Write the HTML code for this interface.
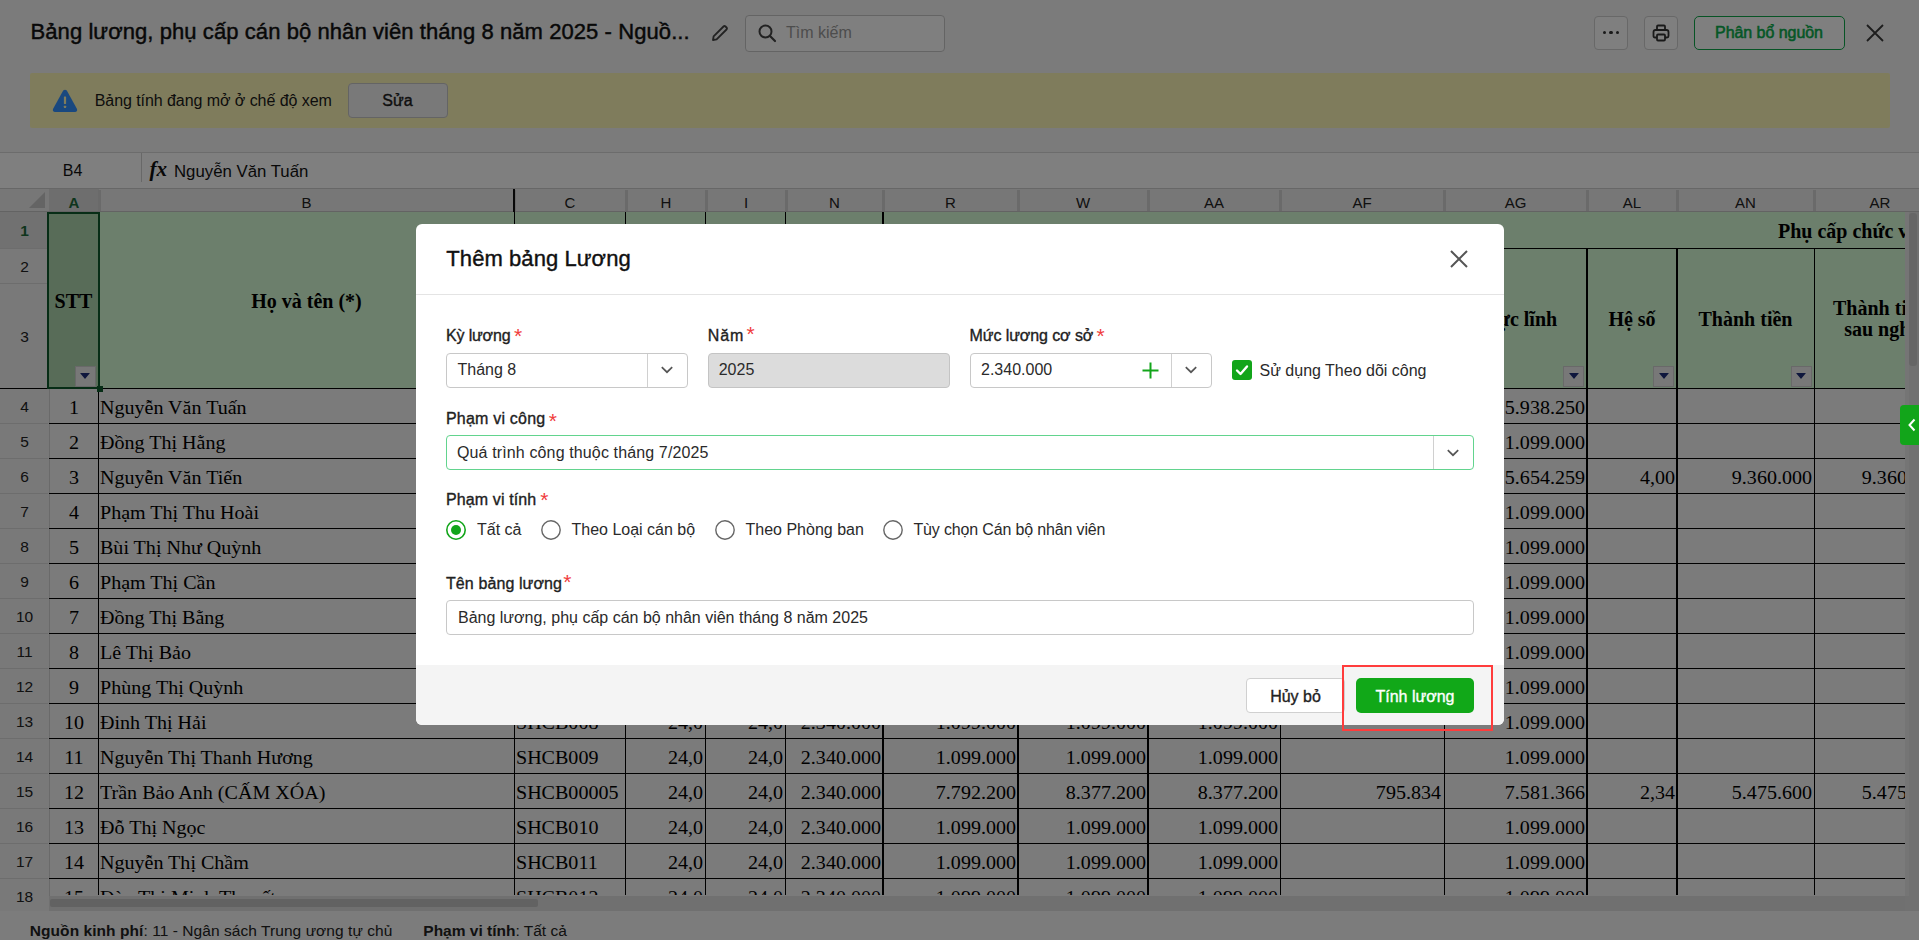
<!DOCTYPE html><html><head><meta charset="utf-8"><style>
html,body{margin:0;padding:0;}
body{width:1919px;height:940px;overflow:hidden;position:relative;background:#f6f6f6;}
.t{position:absolute;white-space:nowrap;line-height:1;}
.med{-webkit-text-stroke:0.35px currentColor;}
</style></head><body>
<div class="t" style="left:30.5px;top:21.18px;font-family:'Liberation Sans', sans-serif;font-size:22px;color:#111;font-weight:400;-webkit-text-stroke:0.45px #111;letter-spacing:0.08px;">Bảng lương, phụ cấp cán bộ nhân viên tháng 8 năm 2025 - Nguồ...</div>
<svg style="position:absolute;left:710px;top:23px" width="20" height="20" viewBox="0 0 20 20"><path d="M3 17 L3.6 13.4 L13.5 3.5 Q14.5 2.5 15.5 3.5 L16.5 4.5 Q17.5 5.5 16.5 6.5 L6.6 16.4 Z" fill="none" stroke="#444" stroke-width="1.8" stroke-linejoin="round"/></svg>
<div style="position:absolute;left:745px;top:15px;width:198px;height:35px;border:1px solid #c9c9c9;border-radius:4px;background:#fff;"></div>
<svg style="position:absolute;left:757px;top:23px" width="20" height="20" viewBox="0 0 20 20"><circle cx="8.5" cy="8.5" r="6" fill="none" stroke="#444" stroke-width="2"/><path d="M13 13 L18 18" stroke="#444" stroke-width="2.2" stroke-linecap="round"/></svg>
<div class="t" style="left:786px;top:24.96px;font-family:'Liberation Sans', sans-serif;font-size:16px;color:#9a9a9a;font-weight:400;">Tìm kiếm</div>
<div style="position:absolute;left:1594px;top:16px;width:32px;height:32px;border:1px solid #d0d0d0;border-radius:4px;background:#fff;"></div>
<div style="position:absolute;left:1602.5px;top:30.7px;width:3.6px;height:3.6px;background:#333;border-radius:50%;"></div>
<div style="position:absolute;left:1609.1000000000001px;top:30.7px;width:3.6px;height:3.6px;background:#333;border-radius:50%;"></div>
<div style="position:absolute;left:1615.7px;top:30.7px;width:3.6px;height:3.6px;background:#333;border-radius:50%;"></div>
<div style="position:absolute;left:1644px;top:16px;width:32px;height:32px;border:1px solid #d0d0d0;border-radius:4px;background:#fff;"></div>
<svg style="position:absolute;left:1651px;top:23px" width="20" height="20" viewBox="0 0 20 20"><path d="M6 7 V3.5 Q6 2.5 7 2.5 H13 Q14 2.5 14 3.5 V7" fill="none" stroke="#333" stroke-width="1.8"/><path d="M6 14.5 H4 Q2.5 14.5 2.5 13 V9 Q2.5 7 4.5 7 H15.5 Q17.5 7 17.5 9 V13 Q17.5 14.5 16 14.5 H14" fill="none" stroke="#333" stroke-width="1.8"/><rect x="6" y="11.5" width="8" height="6" rx="1" fill="none" stroke="#333" stroke-width="1.8"/></svg>
<div style="position:absolute;left:1694px;top:16px;width:149px;height:32px;border:1.7px solid #0fa84a;border-radius:5px;background:#fff;"></div>
<div class="t" style="left:1694.0px;width:150px;text-align:center;top:24.76px;font-family:'Liberation Sans', sans-serif;font-size:16px;color:#0aae4c;font-weight:400;-webkit-text-stroke:0.55px #0aae4c;letter-spacing:-0.05px;">Phân bổ nguồn</div>
<svg style="position:absolute;left:1865px;top:23px" width="20" height="20" viewBox="0 0 20 20"><path d="M2 2 L18 18 M18 2 L2 18" stroke="#3a3a3a" stroke-width="1.8"/></svg>
<div style="position:absolute;left:30px;top:73.3px;width:1860px;height:54.5px;background:#fff8b9;border-radius:2px;"></div>
<svg style="position:absolute;left:52px;top:89px" width="26" height="24" viewBox="0 0 26 24"><path d="M11.2 1.6 Q13 0 14.8 1.6 L25 20 Q25.8 22.6 23 23 H3 Q0.2 22.6 1 20 Z" fill="#3390ff"/><rect x="11.9" y="7.6" width="2.2" height="7.4" rx="0.4" fill="#fff8b9"/><rect x="11.9" y="16.8" width="2.2" height="2.2" rx="0.4" fill="#fff8b9"/></svg>
<div class="t" style="left:94.7px;top:92.76px;font-family:'Liberation Sans', sans-serif;font-size:16px;color:#1a1a1a;font-weight:400;letter-spacing:-0.06px;">Bảng tính đang mở ở chế độ xem</div>
<div style="position:absolute;left:348px;top:83px;width:98px;height:33px;border:1px solid #c8c8c8;border-radius:4px;background:#f3f3f3;"></div>
<div class="t" style="left:348.5px;width:98px;text-align:center;top:92.76px;font-family:'Liberation Sans', sans-serif;font-size:16px;color:#1e1e1e;font-weight:400;-webkit-text-stroke:0.4px #1e1e1e;">Sửa</div>
<div style="position:absolute;left:0px;top:152px;width:1919px;height:1px;background:#d9d9d9;"></div>
<div style="position:absolute;left:0px;top:153px;width:1919px;height:35px;background:#fff;"></div>
<div class="t" style="left:42.5px;width:60px;text-align:center;top:162.66px;font-family:'Liberation Sans', sans-serif;font-size:16px;color:#111;font-weight:400;">B4</div>
<div style="position:absolute;left:141px;top:153px;width:1px;height:29px;background:#d0d0d0;"></div>
<div class="t" style="left:149.5px;top:159.41px;font-family:'Liberation Serif', serif;font-size:21px;color:#111;font-weight:700;font-style:italic;letter-spacing:0px;">fx</div>
<div class="t" style="left:174px;top:163.58px;font-family:'Liberation Sans', sans-serif;font-size:16.8px;color:#111;font-weight:400;">Nguyễn Văn Tuấn</div>
<div style="position:absolute;left:0px;top:188px;width:1919px;height:1px;background:#cfcfcf;"></div>
<div style="position:absolute;left:0px;top:189px;width:1919px;height:23px;background:#eeeeee;"></div>
<svg style="position:absolute;left:28px;top:191px" width="18" height="18" viewBox="0 0 18 18"><path d="M17 1 V17 H1 Z" fill="#c8c8c8"/></svg>
<div style="position:absolute;left:49px;top:189px;width:50px;height:23px;background:#dcdcdc;"></div>
<div style="position:absolute;left:98px;top:190px;width:3px;height:22px;background:#d4d4d4;"></div>
<div class="t" style="left:34.0px;width:80px;text-align:center;top:194.70px;font-family:'Liberation Sans', sans-serif;font-size:15px;color:#1e6b3a;font-weight:400;font-weight:700;">A</div>
<div style="position:absolute;left:513px;top:190px;width:3px;height:22px;background:#d4d4d4;"></div>
<div class="t" style="left:266.5px;width:80px;text-align:center;top:194.70px;font-family:'Liberation Sans', sans-serif;font-size:15px;color:#222;font-weight:400;">B</div>
<div style="position:absolute;left:625px;top:190px;width:3px;height:22px;background:#d4d4d4;"></div>
<div class="t" style="left:530.0px;width:80px;text-align:center;top:194.70px;font-family:'Liberation Sans', sans-serif;font-size:15px;color:#222;font-weight:400;">C</div>
<div style="position:absolute;left:705px;top:190px;width:3px;height:22px;background:#d4d4d4;"></div>
<div class="t" style="left:626.0px;width:80px;text-align:center;top:194.70px;font-family:'Liberation Sans', sans-serif;font-size:15px;color:#222;font-weight:400;">H</div>
<div style="position:absolute;left:785px;top:190px;width:3px;height:22px;background:#d4d4d4;"></div>
<div class="t" style="left:706.0px;width:80px;text-align:center;top:194.70px;font-family:'Liberation Sans', sans-serif;font-size:15px;color:#222;font-weight:400;">I</div>
<div style="position:absolute;left:882px;top:190px;width:3px;height:22px;background:#d4d4d4;"></div>
<div class="t" style="left:794.5px;width:80px;text-align:center;top:194.70px;font-family:'Liberation Sans', sans-serif;font-size:15px;color:#222;font-weight:400;">N</div>
<div style="position:absolute;left:1017px;top:190px;width:3px;height:22px;background:#d4d4d4;"></div>
<div class="t" style="left:910.5px;width:80px;text-align:center;top:194.70px;font-family:'Liberation Sans', sans-serif;font-size:15px;color:#222;font-weight:400;">R</div>
<div style="position:absolute;left:1147px;top:190px;width:3px;height:22px;background:#d4d4d4;"></div>
<div class="t" style="left:1043.0px;width:80px;text-align:center;top:194.70px;font-family:'Liberation Sans', sans-serif;font-size:15px;color:#222;font-weight:400;">W</div>
<div style="position:absolute;left:1279px;top:190px;width:3px;height:22px;background:#d4d4d4;"></div>
<div class="t" style="left:1174.0px;width:80px;text-align:center;top:194.70px;font-family:'Liberation Sans', sans-serif;font-size:15px;color:#222;font-weight:400;">AA</div>
<div style="position:absolute;left:1443px;top:190px;width:3px;height:22px;background:#d4d4d4;"></div>
<div class="t" style="left:1322.0px;width:80px;text-align:center;top:194.70px;font-family:'Liberation Sans', sans-serif;font-size:15px;color:#222;font-weight:400;">AF</div>
<div style="position:absolute;left:1586px;top:190px;width:3px;height:22px;background:#d4d4d4;"></div>
<div class="t" style="left:1475.5px;width:80px;text-align:center;top:194.70px;font-family:'Liberation Sans', sans-serif;font-size:15px;color:#222;font-weight:400;">AG</div>
<div style="position:absolute;left:1676px;top:190px;width:3px;height:22px;background:#d4d4d4;"></div>
<div class="t" style="left:1592.0px;width:80px;text-align:center;top:194.70px;font-family:'Liberation Sans', sans-serif;font-size:15px;color:#222;font-weight:400;">AL</div>
<div style="position:absolute;left:1813px;top:190px;width:3px;height:22px;background:#d4d4d4;"></div>
<div class="t" style="left:1705.5px;width:80px;text-align:center;top:194.70px;font-family:'Liberation Sans', sans-serif;font-size:15px;color:#222;font-weight:400;">AN</div>
<div style="position:absolute;left:1989px;top:190px;width:3px;height:22px;background:#d4d4d4;"></div>
<div class="t" style="left:1840.0px;width:80px;text-align:center;top:194.70px;font-family:'Liberation Sans', sans-serif;font-size:15px;color:#222;font-weight:400;">AR</div>
<div style="position:absolute;left:0px;top:211px;width:1919px;height:1px;background:#c6c6c6;"></div>
<div style="position:absolute;left:513px;top:189px;width:2px;height:23px;background:#111;"></div>
<div style="position:absolute;left:0px;top:212px;width:49px;height:700px;background:#f3f3f3;"></div>
<div style="position:absolute;left:49px;top:212px;width:1px;height:700px;background:#d5d5d5;"></div>
<div style="position:absolute;left:0px;top:212px;width:48px;height:36px;background:#e2e2e2;"></div>
<div style="position:absolute;left:0px;top:248px;width:48px;height:1px;background:#dadada;"></div>
<div class="t" style="left:0.5px;width:48px;text-align:center;top:223.38px;font-family:'Liberation Sans', sans-serif;font-size:15.5px;color:#1e6b3a;font-weight:400;font-weight:700;">1</div>
<div style="position:absolute;left:0px;top:283px;width:48px;height:1px;background:#dadada;"></div>
<div class="t" style="left:0.5px;width:48px;text-align:center;top:258.88px;font-family:'Liberation Sans', sans-serif;font-size:15.5px;color:#222;font-weight:400;">2</div>
<div style="position:absolute;left:0px;top:388px;width:48px;height:1px;background:#dadada;"></div>
<div class="t" style="left:0.5px;width:48px;text-align:center;top:328.88px;font-family:'Liberation Sans', sans-serif;font-size:15.5px;color:#222;font-weight:400;">3</div>
<div style="position:absolute;left:0px;top:423px;width:48px;height:1px;background:#dadada;"></div>
<div class="t" style="left:0.5px;width:48px;text-align:center;top:398.88px;font-family:'Liberation Sans', sans-serif;font-size:15.5px;color:#222;font-weight:400;">4</div>
<div style="position:absolute;left:0px;top:458px;width:48px;height:1px;background:#dadada;"></div>
<div class="t" style="left:0.5px;width:48px;text-align:center;top:433.88px;font-family:'Liberation Sans', sans-serif;font-size:15.5px;color:#222;font-weight:400;">5</div>
<div style="position:absolute;left:0px;top:493px;width:48px;height:1px;background:#dadada;"></div>
<div class="t" style="left:0.5px;width:48px;text-align:center;top:468.88px;font-family:'Liberation Sans', sans-serif;font-size:15.5px;color:#222;font-weight:400;">6</div>
<div style="position:absolute;left:0px;top:528px;width:48px;height:1px;background:#dadada;"></div>
<div class="t" style="left:0.5px;width:48px;text-align:center;top:503.88px;font-family:'Liberation Sans', sans-serif;font-size:15.5px;color:#222;font-weight:400;">7</div>
<div style="position:absolute;left:0px;top:563px;width:48px;height:1px;background:#dadada;"></div>
<div class="t" style="left:0.5px;width:48px;text-align:center;top:538.88px;font-family:'Liberation Sans', sans-serif;font-size:15.5px;color:#222;font-weight:400;">8</div>
<div style="position:absolute;left:0px;top:598px;width:48px;height:1px;background:#dadada;"></div>
<div class="t" style="left:0.5px;width:48px;text-align:center;top:573.88px;font-family:'Liberation Sans', sans-serif;font-size:15.5px;color:#222;font-weight:400;">9</div>
<div style="position:absolute;left:0px;top:633px;width:48px;height:1px;background:#dadada;"></div>
<div class="t" style="left:0.5px;width:48px;text-align:center;top:608.88px;font-family:'Liberation Sans', sans-serif;font-size:15.5px;color:#222;font-weight:400;">10</div>
<div style="position:absolute;left:0px;top:668px;width:48px;height:1px;background:#dadada;"></div>
<div class="t" style="left:0.5px;width:48px;text-align:center;top:643.88px;font-family:'Liberation Sans', sans-serif;font-size:15.5px;color:#222;font-weight:400;">11</div>
<div style="position:absolute;left:0px;top:703px;width:48px;height:1px;background:#dadada;"></div>
<div class="t" style="left:0.5px;width:48px;text-align:center;top:678.88px;font-family:'Liberation Sans', sans-serif;font-size:15.5px;color:#222;font-weight:400;">12</div>
<div style="position:absolute;left:0px;top:738px;width:48px;height:1px;background:#dadada;"></div>
<div class="t" style="left:0.5px;width:48px;text-align:center;top:713.88px;font-family:'Liberation Sans', sans-serif;font-size:15.5px;color:#222;font-weight:400;">13</div>
<div style="position:absolute;left:0px;top:773px;width:48px;height:1px;background:#dadada;"></div>
<div class="t" style="left:0.5px;width:48px;text-align:center;top:748.88px;font-family:'Liberation Sans', sans-serif;font-size:15.5px;color:#222;font-weight:400;">14</div>
<div style="position:absolute;left:0px;top:808px;width:48px;height:1px;background:#dadada;"></div>
<div class="t" style="left:0.5px;width:48px;text-align:center;top:783.88px;font-family:'Liberation Sans', sans-serif;font-size:15.5px;color:#222;font-weight:400;">15</div>
<div style="position:absolute;left:0px;top:843px;width:48px;height:1px;background:#dadada;"></div>
<div class="t" style="left:0.5px;width:48px;text-align:center;top:818.88px;font-family:'Liberation Sans', sans-serif;font-size:15.5px;color:#222;font-weight:400;">16</div>
<div style="position:absolute;left:0px;top:878px;width:48px;height:1px;background:#dadada;"></div>
<div class="t" style="left:0.5px;width:48px;text-align:center;top:853.88px;font-family:'Liberation Sans', sans-serif;font-size:15.5px;color:#222;font-weight:400;">17</div>
<div style="position:absolute;left:0px;top:913px;width:48px;height:1px;background:#dadada;"></div>
<div class="t" style="left:0.5px;width:48px;text-align:center;top:888.88px;font-family:'Liberation Sans', sans-serif;font-size:15.5px;color:#222;font-weight:400;">18</div>
<div style="position:absolute;left:0px;top:388px;width:49px;height:1.3px;background:#000;"></div>
<div style="position:absolute;left:49px;top:212px;width:1856px;height:683px;overflow:hidden;">
<div style="position:absolute;left:0px;top:0px;width:1900px;height:176px;background:#d8ffd8;"></div>
<div style="position:absolute;left:48.75px;top:0px;width:1.3px;height:176px;background:#000;"></div>
<div style="position:absolute;left:464.54999999999995px;top:0px;width:1.3px;height:176px;background:#000;"></div>
<div style="position:absolute;left:575.9px;top:0px;width:1.2px;height:176px;background:#000;"></div>
<div style="position:absolute;left:655.9px;top:0px;width:1.2px;height:176px;background:#000;"></div>
<div style="position:absolute;left:735.9px;top:0px;width:1.2px;height:176px;background:#000;"></div>
<div style="position:absolute;left:833.25px;top:0px;width:1.7px;height:176px;background:#000;"></div>
<div style="position:absolute;left:1537.05px;top:36.5px;width:1.7px;height:140px;background:#000;"></div>
<div style="position:absolute;left:1627.05px;top:36.5px;width:1.7px;height:140px;background:#000;"></div>
<div style="position:absolute;left:1764.75px;top:36.5px;width:1.3px;height:140px;background:#000;"></div>
<div style="position:absolute;left:1395px;top:36px;width:500px;height:1.2px;background:#000;"></div>
<div style="position:absolute;left:0px;top:176px;width:1900px;height:1.3px;background:#000;"></div>
<div style="position:absolute;left:48.75px;top:176px;width:1.3px;height:520px;background:#000;"></div>
<div style="position:absolute;left:464.54999999999995px;top:176px;width:1.3px;height:520px;background:#000;"></div>
<div style="position:absolute;left:575.9px;top:176px;width:1.2px;height:520px;background:#000;"></div>
<div style="position:absolute;left:655.9px;top:176px;width:1.2px;height:520px;background:#000;"></div>
<div style="position:absolute;left:735.9px;top:176px;width:1.2px;height:520px;background:#000;"></div>
<div style="position:absolute;left:833.25px;top:176px;width:1.7px;height:520px;background:#000;"></div>
<div style="position:absolute;left:968.25px;top:176px;width:1.7px;height:520px;background:#000;"></div>
<div style="position:absolute;left:1098.25px;top:176px;width:1.7px;height:520px;background:#000;"></div>
<div style="position:absolute;left:1230.95px;top:176px;width:1.3px;height:520px;background:#000;"></div>
<div style="position:absolute;left:1394.75px;top:176px;width:1.3px;height:520px;background:#000;"></div>
<div style="position:absolute;left:1537.05px;top:176px;width:1.7px;height:520px;background:#000;"></div>
<div style="position:absolute;left:1627.05px;top:176px;width:1.7px;height:520px;background:#000;"></div>
<div style="position:absolute;left:1764.75px;top:176px;width:1.3px;height:520px;background:#000;"></div>
<div style="position:absolute;left:0px;top:211px;width:1900px;height:1.3px;background:#000;"></div>
<div style="position:absolute;left:0px;top:246px;width:1900px;height:1.3px;background:#000;"></div>
<div style="position:absolute;left:0px;top:281px;width:1900px;height:1.3px;background:#000;"></div>
<div style="position:absolute;left:0px;top:316px;width:1900px;height:1.3px;background:#000;"></div>
<div style="position:absolute;left:0px;top:351px;width:1900px;height:1.3px;background:#000;"></div>
<div style="position:absolute;left:0px;top:386px;width:1900px;height:1.3px;background:#000;"></div>
<div style="position:absolute;left:0px;top:421px;width:1900px;height:1.3px;background:#000;"></div>
<div style="position:absolute;left:0px;top:456px;width:1900px;height:1.3px;background:#000;"></div>
<div style="position:absolute;left:0px;top:491px;width:1900px;height:1.3px;background:#000;"></div>
<div style="position:absolute;left:0px;top:526px;width:1900px;height:1.3px;background:#000;"></div>
<div style="position:absolute;left:0px;top:561px;width:1900px;height:1.3px;background:#000;"></div>
<div style="position:absolute;left:0px;top:596px;width:1900px;height:1.3px;background:#000;"></div>
<div style="position:absolute;left:0px;top:631px;width:1900px;height:1.3px;background:#000;"></div>
<div style="position:absolute;left:0px;top:666px;width:1900px;height:1.3px;background:#000;"></div>
<div style="position:absolute;left:0px;top:701px;width:1900px;height:1.3px;background:#000;"></div>
<div style="position:absolute;left:0px;top:1px;width:50px;height:175px;background:rgba(0,40,0,0.18);"></div>
<div class="t" style="left:-0.5px;width:50px;text-align:center;top:79.25px;font-family:'Liberation Serif', serif;font-size:20px;color:#000;font-weight:700;">STT</div>
<div class="t" style="left:57.5px;width:400px;text-align:center;top:79.25px;font-family:'Liberation Serif', serif;font-size:20px;color:#000;font-weight:700;">Họ và tên (*)</div>
<div class="t" style="left:1396.3px;width:140px;text-align:center;top:97.25px;font-family:'Liberation Serif', serif;font-size:20px;color:#000;font-weight:700;">Thực lĩnh</div>
<div class="t" style="left:1538.0px;width:90px;text-align:center;top:97.25px;font-family:'Liberation Serif', serif;font-size:20px;color:#000;font-weight:700;">Hệ số</div>
<div class="t" style="left:1628.0px;width:137px;text-align:center;top:97.25px;font-family:'Liberation Serif', serif;font-size:20px;color:#000;font-weight:700;">Thành tiền</div>
<div class="t" style="left:1762.5px;width:137px;text-align:center;top:85.65px;font-family:'Liberation Serif', serif;font-size:20px;color:#000;font-weight:700;">Thành tiền</div>
<div class="t" style="left:1762.5px;width:137px;text-align:center;top:106.75px;font-family:'Liberation Serif', serif;font-size:20px;color:#000;font-weight:700;">sau nghỉ</div>
<div class="t" style="left:1729px;top:9.45px;font-family:'Liberation Serif', serif;font-size:20px;color:#000;font-weight:700;">Phụ cấp chức vụ</div>
<div style="position:absolute;left:25.5px;top:153.5px;width:21px;height:21px;background:#f0f0f0;border:1px solid #d2d2d2;box-sizing:border-box;"></div>
<svg style="position:absolute;left:31.0px;top:161.0px" width="10" height="6" viewBox="0 0 10 6"><path d="M0.5 0 H9.5 Q10 0 9.6 0.5 L5.4 5.5 Q5 6 4.6 5.5 L0.4 0.5 Q0 0 0.5 0 Z" fill="#1f2f7a"/></svg>
<div style="position:absolute;left:1514.4px;top:153.5px;width:21px;height:21px;background:#f0f0f0;border:1px solid #d2d2d2;box-sizing:border-box;"></div>
<svg style="position:absolute;left:1519.9px;top:161.0px" width="10" height="6" viewBox="0 0 10 6"><path d="M0.5 0 H9.5 Q10 0 9.6 0.5 L5.4 5.5 Q5 6 4.6 5.5 L0.4 0.5 Q0 0 0.5 0 Z" fill="#1f2f7a"/></svg>
<div style="position:absolute;left:1604.4px;top:153.5px;width:21px;height:21px;background:#f0f0f0;border:1px solid #d2d2d2;box-sizing:border-box;"></div>
<svg style="position:absolute;left:1609.9px;top:161.0px" width="10" height="6" viewBox="0 0 10 6"><path d="M0.5 0 H9.5 Q10 0 9.6 0.5 L5.4 5.5 Q5 6 4.6 5.5 L0.4 0.5 Q0 0 0.5 0 Z" fill="#1f2f7a"/></svg>
<div style="position:absolute;left:1741.9px;top:153.5px;width:21px;height:21px;background:#f0f0f0;border:1px solid #d2d2d2;box-sizing:border-box;"></div>
<svg style="position:absolute;left:1747.4px;top:161.0px" width="10" height="6" viewBox="0 0 10 6"><path d="M0.5 0 H9.5 Q10 0 9.6 0.5 L5.4 5.5 Q5 6 4.6 5.5 L0.4 0.5 Q0 0 0.5 0 Z" fill="#1f2f7a"/></svg>
<div class="t" style="left:-0.5px;width:50px;text-align:center;top:185.89px;font-family:'Liberation Serif', serif;font-size:19px;color:#000;font-weight:400;transform:scaleX(1.055);transform-origin:center;">1</div>
<div class="t" style="left:51px;top:185.89px;font-family:'Liberation Serif', serif;font-size:19px;color:#000;font-weight:400;transform:scaleX(1.055);transform-origin:left;">Nguyễn Văn Tuấn</div>
<div class="t" style="left:467.29999999999995px;top:185.89px;font-family:'Liberation Serif', serif;font-size:19px;color:#000;font-weight:400;transform:scaleX(1.055);transform-origin:left;">SHCB001</div>
<div class="t" style="left:584.3px;width:70px;text-align:right;top:185.89px;font-family:'Liberation Serif', serif;font-size:19px;color:#000;font-weight:400;transform:scaleX(1.055);transform-origin:right;">24,0</div>
<div class="t" style="left:664.3px;width:70px;text-align:right;top:185.89px;font-family:'Liberation Serif', serif;font-size:19px;color:#000;font-weight:400;transform:scaleX(1.055);transform-origin:right;">24,0</div>
<div class="t" style="left:742px;width:90px;text-align:right;top:185.89px;font-family:'Liberation Serif', serif;font-size:19px;color:#000;font-weight:400;transform:scaleX(1.055);transform-origin:right;">2.340.000</div>
<div class="t" style="left:847px;width:120px;text-align:right;top:185.89px;font-family:'Liberation Serif', serif;font-size:19px;color:#000;font-weight:400;transform:scaleX(1.055);transform-origin:right;">1.099.000</div>
<div class="t" style="left:977px;width:120px;text-align:right;top:185.89px;font-family:'Liberation Serif', serif;font-size:19px;color:#000;font-weight:400;transform:scaleX(1.055);transform-origin:right;">1.099.000</div>
<div class="t" style="left:1109px;width:120px;text-align:right;top:185.89px;font-family:'Liberation Serif', serif;font-size:19px;color:#000;font-weight:400;transform:scaleX(1.055);transform-origin:right;">1.099.000</div>
<div class="t" style="left:1406px;width:130px;text-align:right;top:185.89px;font-family:'Liberation Serif', serif;font-size:19px;color:#000;font-weight:400;transform:scaleX(1.055);transform-origin:right;">5.938.250</div>
<div class="t" style="left:-0.5px;width:50px;text-align:center;top:220.89px;font-family:'Liberation Serif', serif;font-size:19px;color:#000;font-weight:400;transform:scaleX(1.055);transform-origin:center;">2</div>
<div class="t" style="left:51px;top:220.89px;font-family:'Liberation Serif', serif;font-size:19px;color:#000;font-weight:400;transform:scaleX(1.055);transform-origin:left;">Đồng Thị Hằng</div>
<div class="t" style="left:467.29999999999995px;top:220.89px;font-family:'Liberation Serif', serif;font-size:19px;color:#000;font-weight:400;transform:scaleX(1.055);transform-origin:left;">SHCB002</div>
<div class="t" style="left:584.3px;width:70px;text-align:right;top:220.89px;font-family:'Liberation Serif', serif;font-size:19px;color:#000;font-weight:400;transform:scaleX(1.055);transform-origin:right;">24,0</div>
<div class="t" style="left:664.3px;width:70px;text-align:right;top:220.89px;font-family:'Liberation Serif', serif;font-size:19px;color:#000;font-weight:400;transform:scaleX(1.055);transform-origin:right;">24,0</div>
<div class="t" style="left:742px;width:90px;text-align:right;top:220.89px;font-family:'Liberation Serif', serif;font-size:19px;color:#000;font-weight:400;transform:scaleX(1.055);transform-origin:right;">2.340.000</div>
<div class="t" style="left:847px;width:120px;text-align:right;top:220.89px;font-family:'Liberation Serif', serif;font-size:19px;color:#000;font-weight:400;transform:scaleX(1.055);transform-origin:right;">1.099.000</div>
<div class="t" style="left:977px;width:120px;text-align:right;top:220.89px;font-family:'Liberation Serif', serif;font-size:19px;color:#000;font-weight:400;transform:scaleX(1.055);transform-origin:right;">1.099.000</div>
<div class="t" style="left:1109px;width:120px;text-align:right;top:220.89px;font-family:'Liberation Serif', serif;font-size:19px;color:#000;font-weight:400;transform:scaleX(1.055);transform-origin:right;">1.099.000</div>
<div class="t" style="left:1406px;width:130px;text-align:right;top:220.89px;font-family:'Liberation Serif', serif;font-size:19px;color:#000;font-weight:400;transform:scaleX(1.055);transform-origin:right;">1.099.000</div>
<div class="t" style="left:-0.5px;width:50px;text-align:center;top:255.89px;font-family:'Liberation Serif', serif;font-size:19px;color:#000;font-weight:400;transform:scaleX(1.055);transform-origin:center;">3</div>
<div class="t" style="left:51px;top:255.89px;font-family:'Liberation Serif', serif;font-size:19px;color:#000;font-weight:400;transform:scaleX(1.055);transform-origin:left;">Nguyễn Văn Tiến</div>
<div class="t" style="left:467.29999999999995px;top:255.89px;font-family:'Liberation Serif', serif;font-size:19px;color:#000;font-weight:400;transform:scaleX(1.055);transform-origin:left;">SHCB003</div>
<div class="t" style="left:584.3px;width:70px;text-align:right;top:255.89px;font-family:'Liberation Serif', serif;font-size:19px;color:#000;font-weight:400;transform:scaleX(1.055);transform-origin:right;">24,0</div>
<div class="t" style="left:664.3px;width:70px;text-align:right;top:255.89px;font-family:'Liberation Serif', serif;font-size:19px;color:#000;font-weight:400;transform:scaleX(1.055);transform-origin:right;">24,0</div>
<div class="t" style="left:742px;width:90px;text-align:right;top:255.89px;font-family:'Liberation Serif', serif;font-size:19px;color:#000;font-weight:400;transform:scaleX(1.055);transform-origin:right;">2.340.000</div>
<div class="t" style="left:847px;width:120px;text-align:right;top:255.89px;font-family:'Liberation Serif', serif;font-size:19px;color:#000;font-weight:400;transform:scaleX(1.055);transform-origin:right;">1.099.000</div>
<div class="t" style="left:977px;width:120px;text-align:right;top:255.89px;font-family:'Liberation Serif', serif;font-size:19px;color:#000;font-weight:400;transform:scaleX(1.055);transform-origin:right;">1.099.000</div>
<div class="t" style="left:1109px;width:120px;text-align:right;top:255.89px;font-family:'Liberation Serif', serif;font-size:19px;color:#000;font-weight:400;transform:scaleX(1.055);transform-origin:right;">1.099.000</div>
<div class="t" style="left:1406px;width:130px;text-align:right;top:255.89px;font-family:'Liberation Serif', serif;font-size:19px;color:#000;font-weight:400;transform:scaleX(1.055);transform-origin:right;">5.654.259</div>
<div class="t" style="left:1546px;width:80px;text-align:right;top:255.89px;font-family:'Liberation Serif', serif;font-size:19px;color:#000;font-weight:400;transform:scaleX(1.055);transform-origin:right;">4,00</div>
<div class="t" style="left:1633px;width:130px;text-align:right;top:255.89px;font-family:'Liberation Serif', serif;font-size:19px;color:#000;font-weight:400;transform:scaleX(1.055);transform-origin:right;">9.360.000</div>
<div class="t" style="left:1763px;width:130px;text-align:right;top:255.89px;font-family:'Liberation Serif', serif;font-size:19px;color:#000;font-weight:400;transform:scaleX(1.055);transform-origin:right;">9.360.000</div>
<div class="t" style="left:-0.5px;width:50px;text-align:center;top:290.89px;font-family:'Liberation Serif', serif;font-size:19px;color:#000;font-weight:400;transform:scaleX(1.055);transform-origin:center;">4</div>
<div class="t" style="left:51px;top:290.89px;font-family:'Liberation Serif', serif;font-size:19px;color:#000;font-weight:400;transform:scaleX(1.055);transform-origin:left;">Phạm Thị Thu Hoài</div>
<div class="t" style="left:467.29999999999995px;top:290.89px;font-family:'Liberation Serif', serif;font-size:19px;color:#000;font-weight:400;transform:scaleX(1.055);transform-origin:left;">SHCB004</div>
<div class="t" style="left:584.3px;width:70px;text-align:right;top:290.89px;font-family:'Liberation Serif', serif;font-size:19px;color:#000;font-weight:400;transform:scaleX(1.055);transform-origin:right;">24,0</div>
<div class="t" style="left:664.3px;width:70px;text-align:right;top:290.89px;font-family:'Liberation Serif', serif;font-size:19px;color:#000;font-weight:400;transform:scaleX(1.055);transform-origin:right;">24,0</div>
<div class="t" style="left:742px;width:90px;text-align:right;top:290.89px;font-family:'Liberation Serif', serif;font-size:19px;color:#000;font-weight:400;transform:scaleX(1.055);transform-origin:right;">2.340.000</div>
<div class="t" style="left:847px;width:120px;text-align:right;top:290.89px;font-family:'Liberation Serif', serif;font-size:19px;color:#000;font-weight:400;transform:scaleX(1.055);transform-origin:right;">1.099.000</div>
<div class="t" style="left:977px;width:120px;text-align:right;top:290.89px;font-family:'Liberation Serif', serif;font-size:19px;color:#000;font-weight:400;transform:scaleX(1.055);transform-origin:right;">1.099.000</div>
<div class="t" style="left:1109px;width:120px;text-align:right;top:290.89px;font-family:'Liberation Serif', serif;font-size:19px;color:#000;font-weight:400;transform:scaleX(1.055);transform-origin:right;">1.099.000</div>
<div class="t" style="left:1406px;width:130px;text-align:right;top:290.89px;font-family:'Liberation Serif', serif;font-size:19px;color:#000;font-weight:400;transform:scaleX(1.055);transform-origin:right;">1.099.000</div>
<div class="t" style="left:-0.5px;width:50px;text-align:center;top:325.89px;font-family:'Liberation Serif', serif;font-size:19px;color:#000;font-weight:400;transform:scaleX(1.055);transform-origin:center;">5</div>
<div class="t" style="left:51px;top:325.89px;font-family:'Liberation Serif', serif;font-size:19px;color:#000;font-weight:400;transform:scaleX(1.055);transform-origin:left;">Bùi Thị Như Quỳnh</div>
<div class="t" style="left:467.29999999999995px;top:325.89px;font-family:'Liberation Serif', serif;font-size:19px;color:#000;font-weight:400;transform:scaleX(1.055);transform-origin:left;">SHCB005</div>
<div class="t" style="left:584.3px;width:70px;text-align:right;top:325.89px;font-family:'Liberation Serif', serif;font-size:19px;color:#000;font-weight:400;transform:scaleX(1.055);transform-origin:right;">24,0</div>
<div class="t" style="left:664.3px;width:70px;text-align:right;top:325.89px;font-family:'Liberation Serif', serif;font-size:19px;color:#000;font-weight:400;transform:scaleX(1.055);transform-origin:right;">24,0</div>
<div class="t" style="left:742px;width:90px;text-align:right;top:325.89px;font-family:'Liberation Serif', serif;font-size:19px;color:#000;font-weight:400;transform:scaleX(1.055);transform-origin:right;">2.340.000</div>
<div class="t" style="left:847px;width:120px;text-align:right;top:325.89px;font-family:'Liberation Serif', serif;font-size:19px;color:#000;font-weight:400;transform:scaleX(1.055);transform-origin:right;">1.099.000</div>
<div class="t" style="left:977px;width:120px;text-align:right;top:325.89px;font-family:'Liberation Serif', serif;font-size:19px;color:#000;font-weight:400;transform:scaleX(1.055);transform-origin:right;">1.099.000</div>
<div class="t" style="left:1109px;width:120px;text-align:right;top:325.89px;font-family:'Liberation Serif', serif;font-size:19px;color:#000;font-weight:400;transform:scaleX(1.055);transform-origin:right;">1.099.000</div>
<div class="t" style="left:1406px;width:130px;text-align:right;top:325.89px;font-family:'Liberation Serif', serif;font-size:19px;color:#000;font-weight:400;transform:scaleX(1.055);transform-origin:right;">1.099.000</div>
<div class="t" style="left:-0.5px;width:50px;text-align:center;top:360.89px;font-family:'Liberation Serif', serif;font-size:19px;color:#000;font-weight:400;transform:scaleX(1.055);transform-origin:center;">6</div>
<div class="t" style="left:51px;top:360.89px;font-family:'Liberation Serif', serif;font-size:19px;color:#000;font-weight:400;transform:scaleX(1.055);transform-origin:left;">Phạm Thị Cần</div>
<div class="t" style="left:467.29999999999995px;top:360.89px;font-family:'Liberation Serif', serif;font-size:19px;color:#000;font-weight:400;transform:scaleX(1.055);transform-origin:left;">SHCB006</div>
<div class="t" style="left:584.3px;width:70px;text-align:right;top:360.89px;font-family:'Liberation Serif', serif;font-size:19px;color:#000;font-weight:400;transform:scaleX(1.055);transform-origin:right;">24,0</div>
<div class="t" style="left:664.3px;width:70px;text-align:right;top:360.89px;font-family:'Liberation Serif', serif;font-size:19px;color:#000;font-weight:400;transform:scaleX(1.055);transform-origin:right;">24,0</div>
<div class="t" style="left:742px;width:90px;text-align:right;top:360.89px;font-family:'Liberation Serif', serif;font-size:19px;color:#000;font-weight:400;transform:scaleX(1.055);transform-origin:right;">2.340.000</div>
<div class="t" style="left:847px;width:120px;text-align:right;top:360.89px;font-family:'Liberation Serif', serif;font-size:19px;color:#000;font-weight:400;transform:scaleX(1.055);transform-origin:right;">1.099.000</div>
<div class="t" style="left:977px;width:120px;text-align:right;top:360.89px;font-family:'Liberation Serif', serif;font-size:19px;color:#000;font-weight:400;transform:scaleX(1.055);transform-origin:right;">1.099.000</div>
<div class="t" style="left:1109px;width:120px;text-align:right;top:360.89px;font-family:'Liberation Serif', serif;font-size:19px;color:#000;font-weight:400;transform:scaleX(1.055);transform-origin:right;">1.099.000</div>
<div class="t" style="left:1406px;width:130px;text-align:right;top:360.89px;font-family:'Liberation Serif', serif;font-size:19px;color:#000;font-weight:400;transform:scaleX(1.055);transform-origin:right;">1.099.000</div>
<div class="t" style="left:-0.5px;width:50px;text-align:center;top:395.89px;font-family:'Liberation Serif', serif;font-size:19px;color:#000;font-weight:400;transform:scaleX(1.055);transform-origin:center;">7</div>
<div class="t" style="left:51px;top:395.89px;font-family:'Liberation Serif', serif;font-size:19px;color:#000;font-weight:400;transform:scaleX(1.055);transform-origin:left;">Đồng Thị Bằng</div>
<div class="t" style="left:467.29999999999995px;top:395.89px;font-family:'Liberation Serif', serif;font-size:19px;color:#000;font-weight:400;transform:scaleX(1.055);transform-origin:left;">SHCB007</div>
<div class="t" style="left:584.3px;width:70px;text-align:right;top:395.89px;font-family:'Liberation Serif', serif;font-size:19px;color:#000;font-weight:400;transform:scaleX(1.055);transform-origin:right;">24,0</div>
<div class="t" style="left:664.3px;width:70px;text-align:right;top:395.89px;font-family:'Liberation Serif', serif;font-size:19px;color:#000;font-weight:400;transform:scaleX(1.055);transform-origin:right;">24,0</div>
<div class="t" style="left:742px;width:90px;text-align:right;top:395.89px;font-family:'Liberation Serif', serif;font-size:19px;color:#000;font-weight:400;transform:scaleX(1.055);transform-origin:right;">2.340.000</div>
<div class="t" style="left:847px;width:120px;text-align:right;top:395.89px;font-family:'Liberation Serif', serif;font-size:19px;color:#000;font-weight:400;transform:scaleX(1.055);transform-origin:right;">1.099.000</div>
<div class="t" style="left:977px;width:120px;text-align:right;top:395.89px;font-family:'Liberation Serif', serif;font-size:19px;color:#000;font-weight:400;transform:scaleX(1.055);transform-origin:right;">1.099.000</div>
<div class="t" style="left:1109px;width:120px;text-align:right;top:395.89px;font-family:'Liberation Serif', serif;font-size:19px;color:#000;font-weight:400;transform:scaleX(1.055);transform-origin:right;">1.099.000</div>
<div class="t" style="left:1406px;width:130px;text-align:right;top:395.89px;font-family:'Liberation Serif', serif;font-size:19px;color:#000;font-weight:400;transform:scaleX(1.055);transform-origin:right;">1.099.000</div>
<div class="t" style="left:-0.5px;width:50px;text-align:center;top:430.89px;font-family:'Liberation Serif', serif;font-size:19px;color:#000;font-weight:400;transform:scaleX(1.055);transform-origin:center;">8</div>
<div class="t" style="left:51px;top:430.89px;font-family:'Liberation Serif', serif;font-size:19px;color:#000;font-weight:400;transform:scaleX(1.055);transform-origin:left;">Lê Thị Bảo</div>
<div class="t" style="left:467.29999999999995px;top:430.89px;font-family:'Liberation Serif', serif;font-size:19px;color:#000;font-weight:400;transform:scaleX(1.055);transform-origin:left;">SHCB007</div>
<div class="t" style="left:584.3px;width:70px;text-align:right;top:430.89px;font-family:'Liberation Serif', serif;font-size:19px;color:#000;font-weight:400;transform:scaleX(1.055);transform-origin:right;">24,0</div>
<div class="t" style="left:664.3px;width:70px;text-align:right;top:430.89px;font-family:'Liberation Serif', serif;font-size:19px;color:#000;font-weight:400;transform:scaleX(1.055);transform-origin:right;">24,0</div>
<div class="t" style="left:742px;width:90px;text-align:right;top:430.89px;font-family:'Liberation Serif', serif;font-size:19px;color:#000;font-weight:400;transform:scaleX(1.055);transform-origin:right;">2.340.000</div>
<div class="t" style="left:847px;width:120px;text-align:right;top:430.89px;font-family:'Liberation Serif', serif;font-size:19px;color:#000;font-weight:400;transform:scaleX(1.055);transform-origin:right;">1.099.000</div>
<div class="t" style="left:977px;width:120px;text-align:right;top:430.89px;font-family:'Liberation Serif', serif;font-size:19px;color:#000;font-weight:400;transform:scaleX(1.055);transform-origin:right;">1.099.000</div>
<div class="t" style="left:1109px;width:120px;text-align:right;top:430.89px;font-family:'Liberation Serif', serif;font-size:19px;color:#000;font-weight:400;transform:scaleX(1.055);transform-origin:right;">1.099.000</div>
<div class="t" style="left:1406px;width:130px;text-align:right;top:430.89px;font-family:'Liberation Serif', serif;font-size:19px;color:#000;font-weight:400;transform:scaleX(1.055);transform-origin:right;">1.099.000</div>
<div class="t" style="left:-0.5px;width:50px;text-align:center;top:465.89px;font-family:'Liberation Serif', serif;font-size:19px;color:#000;font-weight:400;transform:scaleX(1.055);transform-origin:center;">9</div>
<div class="t" style="left:51px;top:465.89px;font-family:'Liberation Serif', serif;font-size:19px;color:#000;font-weight:400;transform:scaleX(1.055);transform-origin:left;">Phùng Thị Quỳnh</div>
<div class="t" style="left:467.29999999999995px;top:465.89px;font-family:'Liberation Serif', serif;font-size:19px;color:#000;font-weight:400;transform:scaleX(1.055);transform-origin:left;">SHCB007</div>
<div class="t" style="left:584.3px;width:70px;text-align:right;top:465.89px;font-family:'Liberation Serif', serif;font-size:19px;color:#000;font-weight:400;transform:scaleX(1.055);transform-origin:right;">24,0</div>
<div class="t" style="left:664.3px;width:70px;text-align:right;top:465.89px;font-family:'Liberation Serif', serif;font-size:19px;color:#000;font-weight:400;transform:scaleX(1.055);transform-origin:right;">24,0</div>
<div class="t" style="left:742px;width:90px;text-align:right;top:465.89px;font-family:'Liberation Serif', serif;font-size:19px;color:#000;font-weight:400;transform:scaleX(1.055);transform-origin:right;">2.340.000</div>
<div class="t" style="left:847px;width:120px;text-align:right;top:465.89px;font-family:'Liberation Serif', serif;font-size:19px;color:#000;font-weight:400;transform:scaleX(1.055);transform-origin:right;">1.099.000</div>
<div class="t" style="left:977px;width:120px;text-align:right;top:465.89px;font-family:'Liberation Serif', serif;font-size:19px;color:#000;font-weight:400;transform:scaleX(1.055);transform-origin:right;">1.099.000</div>
<div class="t" style="left:1109px;width:120px;text-align:right;top:465.89px;font-family:'Liberation Serif', serif;font-size:19px;color:#000;font-weight:400;transform:scaleX(1.055);transform-origin:right;">1.099.000</div>
<div class="t" style="left:1406px;width:130px;text-align:right;top:465.89px;font-family:'Liberation Serif', serif;font-size:19px;color:#000;font-weight:400;transform:scaleX(1.055);transform-origin:right;">1.099.000</div>
<div class="t" style="left:-0.5px;width:50px;text-align:center;top:500.89px;font-family:'Liberation Serif', serif;font-size:19px;color:#000;font-weight:400;transform:scaleX(1.055);transform-origin:center;">10</div>
<div class="t" style="left:51px;top:500.89px;font-family:'Liberation Serif', serif;font-size:19px;color:#000;font-weight:400;transform:scaleX(1.055);transform-origin:left;">Đinh Thị Hải</div>
<div class="t" style="left:467.29999999999995px;top:500.89px;font-family:'Liberation Serif', serif;font-size:19px;color:#000;font-weight:400;transform:scaleX(1.055);transform-origin:left;">SHCB008</div>
<div class="t" style="left:584.3px;width:70px;text-align:right;top:500.89px;font-family:'Liberation Serif', serif;font-size:19px;color:#000;font-weight:400;transform:scaleX(1.055);transform-origin:right;">24,0</div>
<div class="t" style="left:664.3px;width:70px;text-align:right;top:500.89px;font-family:'Liberation Serif', serif;font-size:19px;color:#000;font-weight:400;transform:scaleX(1.055);transform-origin:right;">24,0</div>
<div class="t" style="left:742px;width:90px;text-align:right;top:500.89px;font-family:'Liberation Serif', serif;font-size:19px;color:#000;font-weight:400;transform:scaleX(1.055);transform-origin:right;">2.340.000</div>
<div class="t" style="left:847px;width:120px;text-align:right;top:500.89px;font-family:'Liberation Serif', serif;font-size:19px;color:#000;font-weight:400;transform:scaleX(1.055);transform-origin:right;">1.099.000</div>
<div class="t" style="left:977px;width:120px;text-align:right;top:500.89px;font-family:'Liberation Serif', serif;font-size:19px;color:#000;font-weight:400;transform:scaleX(1.055);transform-origin:right;">1.099.000</div>
<div class="t" style="left:1109px;width:120px;text-align:right;top:500.89px;font-family:'Liberation Serif', serif;font-size:19px;color:#000;font-weight:400;transform:scaleX(1.055);transform-origin:right;">1.099.000</div>
<div class="t" style="left:1406px;width:130px;text-align:right;top:500.89px;font-family:'Liberation Serif', serif;font-size:19px;color:#000;font-weight:400;transform:scaleX(1.055);transform-origin:right;">1.099.000</div>
<div class="t" style="left:-0.5px;width:50px;text-align:center;top:535.89px;font-family:'Liberation Serif', serif;font-size:19px;color:#000;font-weight:400;transform:scaleX(1.055);transform-origin:center;">11</div>
<div class="t" style="left:51px;top:535.89px;font-family:'Liberation Serif', serif;font-size:19px;color:#000;font-weight:400;transform:scaleX(1.055);transform-origin:left;">Nguyễn Thị Thanh Hương</div>
<div class="t" style="left:467.29999999999995px;top:535.89px;font-family:'Liberation Serif', serif;font-size:19px;color:#000;font-weight:400;transform:scaleX(1.055);transform-origin:left;">SHCB009</div>
<div class="t" style="left:584.3px;width:70px;text-align:right;top:535.89px;font-family:'Liberation Serif', serif;font-size:19px;color:#000;font-weight:400;transform:scaleX(1.055);transform-origin:right;">24,0</div>
<div class="t" style="left:664.3px;width:70px;text-align:right;top:535.89px;font-family:'Liberation Serif', serif;font-size:19px;color:#000;font-weight:400;transform:scaleX(1.055);transform-origin:right;">24,0</div>
<div class="t" style="left:742px;width:90px;text-align:right;top:535.89px;font-family:'Liberation Serif', serif;font-size:19px;color:#000;font-weight:400;transform:scaleX(1.055);transform-origin:right;">2.340.000</div>
<div class="t" style="left:847px;width:120px;text-align:right;top:535.89px;font-family:'Liberation Serif', serif;font-size:19px;color:#000;font-weight:400;transform:scaleX(1.055);transform-origin:right;">1.099.000</div>
<div class="t" style="left:977px;width:120px;text-align:right;top:535.89px;font-family:'Liberation Serif', serif;font-size:19px;color:#000;font-weight:400;transform:scaleX(1.055);transform-origin:right;">1.099.000</div>
<div class="t" style="left:1109px;width:120px;text-align:right;top:535.89px;font-family:'Liberation Serif', serif;font-size:19px;color:#000;font-weight:400;transform:scaleX(1.055);transform-origin:right;">1.099.000</div>
<div class="t" style="left:1406px;width:130px;text-align:right;top:535.89px;font-family:'Liberation Serif', serif;font-size:19px;color:#000;font-weight:400;transform:scaleX(1.055);transform-origin:right;">1.099.000</div>
<div class="t" style="left:-0.5px;width:50px;text-align:center;top:570.89px;font-family:'Liberation Serif', serif;font-size:19px;color:#000;font-weight:400;transform:scaleX(1.055);transform-origin:center;">12</div>
<div class="t" style="left:51px;top:570.89px;font-family:'Liberation Serif', serif;font-size:19px;color:#000;font-weight:400;transform:scaleX(1.055);transform-origin:left;">Trần Bảo Anh (CẤM XÓA)</div>
<div class="t" style="left:467.29999999999995px;top:570.89px;font-family:'Liberation Serif', serif;font-size:19px;color:#000;font-weight:400;transform:scaleX(1.055);transform-origin:left;">SHCB00005</div>
<div class="t" style="left:584.3px;width:70px;text-align:right;top:570.89px;font-family:'Liberation Serif', serif;font-size:19px;color:#000;font-weight:400;transform:scaleX(1.055);transform-origin:right;">24,0</div>
<div class="t" style="left:664.3px;width:70px;text-align:right;top:570.89px;font-family:'Liberation Serif', serif;font-size:19px;color:#000;font-weight:400;transform:scaleX(1.055);transform-origin:right;">24,0</div>
<div class="t" style="left:742px;width:90px;text-align:right;top:570.89px;font-family:'Liberation Serif', serif;font-size:19px;color:#000;font-weight:400;transform:scaleX(1.055);transform-origin:right;">2.340.000</div>
<div class="t" style="left:847px;width:120px;text-align:right;top:570.89px;font-family:'Liberation Serif', serif;font-size:19px;color:#000;font-weight:400;transform:scaleX(1.055);transform-origin:right;">7.792.200</div>
<div class="t" style="left:977px;width:120px;text-align:right;top:570.89px;font-family:'Liberation Serif', serif;font-size:19px;color:#000;font-weight:400;transform:scaleX(1.055);transform-origin:right;">8.377.200</div>
<div class="t" style="left:1109px;width:120px;text-align:right;top:570.89px;font-family:'Liberation Serif', serif;font-size:19px;color:#000;font-weight:400;transform:scaleX(1.055);transform-origin:right;">8.377.200</div>
<div class="t" style="left:1272px;width:120px;text-align:right;top:570.89px;font-family:'Liberation Serif', serif;font-size:19px;color:#000;font-weight:400;transform:scaleX(1.055);transform-origin:right;">795.834</div>
<div class="t" style="left:1406px;width:130px;text-align:right;top:570.89px;font-family:'Liberation Serif', serif;font-size:19px;color:#000;font-weight:400;transform:scaleX(1.055);transform-origin:right;">7.581.366</div>
<div class="t" style="left:1546px;width:80px;text-align:right;top:570.89px;font-family:'Liberation Serif', serif;font-size:19px;color:#000;font-weight:400;transform:scaleX(1.055);transform-origin:right;">2,34</div>
<div class="t" style="left:1633px;width:130px;text-align:right;top:570.89px;font-family:'Liberation Serif', serif;font-size:19px;color:#000;font-weight:400;transform:scaleX(1.055);transform-origin:right;">5.475.600</div>
<div class="t" style="left:1763px;width:130px;text-align:right;top:570.89px;font-family:'Liberation Serif', serif;font-size:19px;color:#000;font-weight:400;transform:scaleX(1.055);transform-origin:right;">5.475.600</div>
<div class="t" style="left:-0.5px;width:50px;text-align:center;top:605.89px;font-family:'Liberation Serif', serif;font-size:19px;color:#000;font-weight:400;transform:scaleX(1.055);transform-origin:center;">13</div>
<div class="t" style="left:51px;top:605.89px;font-family:'Liberation Serif', serif;font-size:19px;color:#000;font-weight:400;transform:scaleX(1.055);transform-origin:left;">Đỗ Thị Ngọc</div>
<div class="t" style="left:467.29999999999995px;top:605.89px;font-family:'Liberation Serif', serif;font-size:19px;color:#000;font-weight:400;transform:scaleX(1.055);transform-origin:left;">SHCB010</div>
<div class="t" style="left:584.3px;width:70px;text-align:right;top:605.89px;font-family:'Liberation Serif', serif;font-size:19px;color:#000;font-weight:400;transform:scaleX(1.055);transform-origin:right;">24,0</div>
<div class="t" style="left:664.3px;width:70px;text-align:right;top:605.89px;font-family:'Liberation Serif', serif;font-size:19px;color:#000;font-weight:400;transform:scaleX(1.055);transform-origin:right;">24,0</div>
<div class="t" style="left:742px;width:90px;text-align:right;top:605.89px;font-family:'Liberation Serif', serif;font-size:19px;color:#000;font-weight:400;transform:scaleX(1.055);transform-origin:right;">2.340.000</div>
<div class="t" style="left:847px;width:120px;text-align:right;top:605.89px;font-family:'Liberation Serif', serif;font-size:19px;color:#000;font-weight:400;transform:scaleX(1.055);transform-origin:right;">1.099.000</div>
<div class="t" style="left:977px;width:120px;text-align:right;top:605.89px;font-family:'Liberation Serif', serif;font-size:19px;color:#000;font-weight:400;transform:scaleX(1.055);transform-origin:right;">1.099.000</div>
<div class="t" style="left:1109px;width:120px;text-align:right;top:605.89px;font-family:'Liberation Serif', serif;font-size:19px;color:#000;font-weight:400;transform:scaleX(1.055);transform-origin:right;">1.099.000</div>
<div class="t" style="left:1406px;width:130px;text-align:right;top:605.89px;font-family:'Liberation Serif', serif;font-size:19px;color:#000;font-weight:400;transform:scaleX(1.055);transform-origin:right;">1.099.000</div>
<div class="t" style="left:-0.5px;width:50px;text-align:center;top:640.89px;font-family:'Liberation Serif', serif;font-size:19px;color:#000;font-weight:400;transform:scaleX(1.055);transform-origin:center;">14</div>
<div class="t" style="left:51px;top:640.89px;font-family:'Liberation Serif', serif;font-size:19px;color:#000;font-weight:400;transform:scaleX(1.055);transform-origin:left;">Nguyễn Thị Chầm</div>
<div class="t" style="left:467.29999999999995px;top:640.89px;font-family:'Liberation Serif', serif;font-size:19px;color:#000;font-weight:400;transform:scaleX(1.055);transform-origin:left;">SHCB011</div>
<div class="t" style="left:584.3px;width:70px;text-align:right;top:640.89px;font-family:'Liberation Serif', serif;font-size:19px;color:#000;font-weight:400;transform:scaleX(1.055);transform-origin:right;">24,0</div>
<div class="t" style="left:664.3px;width:70px;text-align:right;top:640.89px;font-family:'Liberation Serif', serif;font-size:19px;color:#000;font-weight:400;transform:scaleX(1.055);transform-origin:right;">24,0</div>
<div class="t" style="left:742px;width:90px;text-align:right;top:640.89px;font-family:'Liberation Serif', serif;font-size:19px;color:#000;font-weight:400;transform:scaleX(1.055);transform-origin:right;">2.340.000</div>
<div class="t" style="left:847px;width:120px;text-align:right;top:640.89px;font-family:'Liberation Serif', serif;font-size:19px;color:#000;font-weight:400;transform:scaleX(1.055);transform-origin:right;">1.099.000</div>
<div class="t" style="left:977px;width:120px;text-align:right;top:640.89px;font-family:'Liberation Serif', serif;font-size:19px;color:#000;font-weight:400;transform:scaleX(1.055);transform-origin:right;">1.099.000</div>
<div class="t" style="left:1109px;width:120px;text-align:right;top:640.89px;font-family:'Liberation Serif', serif;font-size:19px;color:#000;font-weight:400;transform:scaleX(1.055);transform-origin:right;">1.099.000</div>
<div class="t" style="left:1406px;width:130px;text-align:right;top:640.89px;font-family:'Liberation Serif', serif;font-size:19px;color:#000;font-weight:400;transform:scaleX(1.055);transform-origin:right;">1.099.000</div>
<div class="t" style="left:-0.5px;width:50px;text-align:center;top:675.89px;font-family:'Liberation Serif', serif;font-size:19px;color:#000;font-weight:400;transform:scaleX(1.055);transform-origin:center;">15</div>
<div class="t" style="left:51px;top:675.89px;font-family:'Liberation Serif', serif;font-size:19px;color:#000;font-weight:400;transform:scaleX(1.055);transform-origin:left;">Đào Thị Minh Thuyết</div>
<div class="t" style="left:467.29999999999995px;top:675.89px;font-family:'Liberation Serif', serif;font-size:19px;color:#000;font-weight:400;transform:scaleX(1.055);transform-origin:left;">SHCB012</div>
<div class="t" style="left:584.3px;width:70px;text-align:right;top:675.89px;font-family:'Liberation Serif', serif;font-size:19px;color:#000;font-weight:400;transform:scaleX(1.055);transform-origin:right;">24,0</div>
<div class="t" style="left:664.3px;width:70px;text-align:right;top:675.89px;font-family:'Liberation Serif', serif;font-size:19px;color:#000;font-weight:400;transform:scaleX(1.055);transform-origin:right;">24,0</div>
<div class="t" style="left:742px;width:90px;text-align:right;top:675.89px;font-family:'Liberation Serif', serif;font-size:19px;color:#000;font-weight:400;transform:scaleX(1.055);transform-origin:right;">2.340.000</div>
<div class="t" style="left:847px;width:120px;text-align:right;top:675.89px;font-family:'Liberation Serif', serif;font-size:19px;color:#000;font-weight:400;transform:scaleX(1.055);transform-origin:right;">1.099.000</div>
<div class="t" style="left:977px;width:120px;text-align:right;top:675.89px;font-family:'Liberation Serif', serif;font-size:19px;color:#000;font-weight:400;transform:scaleX(1.055);transform-origin:right;">1.099.000</div>
<div class="t" style="left:1109px;width:120px;text-align:right;top:675.89px;font-family:'Liberation Serif', serif;font-size:19px;color:#000;font-weight:400;transform:scaleX(1.055);transform-origin:right;">1.099.000</div>
<div class="t" style="left:1406px;width:130px;text-align:right;top:675.89px;font-family:'Liberation Serif', serif;font-size:19px;color:#000;font-weight:400;transform:scaleX(1.055);transform-origin:right;">1.099.000</div>
</div>
<div style="position:absolute;left:47.3px;top:211.6px;width:52.6px;height:177px;border:2px solid #0e5a2c;box-sizing:border-box;"></div>
<div style="position:absolute;left:96.5px;top:385.5px;width:6px;height:6px;background:#0e5a2c;"></div>
<div style="position:absolute;left:49px;top:895.8px;width:1870px;height:15.2px;background:#e0e0e0;"></div>
<div style="position:absolute;left:50px;top:898.8px;width:488px;height:8px;background:#c4c4c4;border-radius:2px;"></div>
<div style="position:absolute;left:1905px;top:212px;width:14px;height:699px;background:#e2e2e2;"></div>
<div style="position:absolute;left:1905px;top:212px;width:4px;height:684px;background:#ebebeb;"></div>
<div style="position:absolute;left:1909px;top:213px;width:7.5px;height:153px;background:#cdcdcd;border-radius:3px;"></div>
<div style="position:absolute;left:0px;top:911px;width:1919px;height:29px;background:#f8f8f8;"></div>
<div class="t" style="left:29.8px;top:922.88px;font-family:'Liberation Sans', sans-serif;font-size:15.5px;color:#222;font-weight:400;letter-spacing:0.06px;"><b>Nguồn kinh phí</b>: 11 - Ngân sách Trung ương tự chủ</div>
<div class="t" style="left:423.3px;top:922.88px;font-family:'Liberation Sans', sans-serif;font-size:15.5px;color:#222;font-weight:400;"><b>Phạm vi tính</b>: Tất cả</div>
<div style="position:absolute;left:0px;top:0px;width:1919px;height:940px;background:rgba(0,0,0,0.5);"></div>
<div style="position:absolute;left:416px;top:224px;width:1088px;height:501px;background:#fff;border-radius:6px;overflow:hidden;">
<div class="t" style="left:30.30000000000001px;top:24.13px;font-family:'Liberation Sans', sans-serif;font-size:22px;color:#111;font-weight:400;-webkit-text-stroke:0.4px #111;letter-spacing:0.08px;">Thêm bảng Lương</div>
<svg style="position:absolute;left:1034px;top:26px" width="18" height="18" viewBox="0 0 18 18"><path d="M1 1 L17 17 M17 1 L1 17" stroke="#555" stroke-width="2"/></svg>
<div style="position:absolute;left:0px;top:70px;width:1088px;height:1px;background:#e4e4e4;"></div>
<div class="t" style="left:30px;top:104.01px;font-family:'Liberation Sans', sans-serif;font-size:16px;color:#212121;font-weight:400;-webkit-text-stroke:0.35px #212121;letter-spacing:-0.16px;">Kỳ lương</div>
<div class="t" style="left:97.90000000000009px;top:101.32px;font-family:'Liberation Sans', sans-serif;font-size:21px;color:#f03c3c;font-weight:400;">*</div>
<div class="t" style="left:291.70000000000005px;top:104.01px;font-family:'Liberation Sans', sans-serif;font-size:16px;color:#212121;font-weight:400;-webkit-text-stroke:0.35px #212121;letter-spacing:0.9px;">Năm</div>
<div class="t" style="left:330.6px;top:99.12px;font-family:'Liberation Sans', sans-serif;font-size:21px;color:#f03c3c;font-weight:400;">*</div>
<div class="t" style="left:553.5px;top:104.01px;font-family:'Liberation Sans', sans-serif;font-size:16px;color:#212121;font-weight:400;-webkit-text-stroke:0.35px #212121;letter-spacing:-0.08px;">Mức lương cơ sở</div>
<div class="t" style="left:680.6000000000001px;top:101.32px;font-family:'Liberation Sans', sans-serif;font-size:21px;color:#f03c3c;font-weight:400;">*</div>
<div style="position:absolute;left:30px;top:129px;width:242px;height:35px;border:1px solid #c8c8c8;border-radius:4px;box-sizing:border-box;background:#fff;"></div>
<div style="position:absolute;left:231px;top:130px;width:1px;height:33px;background:#d0d0d0;"></div>
<svg style="position:absolute;left:245px;top:142px" width="12" height="8" viewBox="0 0 12 8"><path d="M0.8 1.2 L6 6.2 L11.2 1.2" fill="none" stroke="#555" stroke-width="1.7"/></svg>
<div class="t" style="left:41.5px;top:138.21px;font-family:'Liberation Sans', sans-serif;font-size:16px;color:#2a2a2a;font-weight:400;">Tháng 8</div>
<div style="position:absolute;left:292px;top:129px;width:242px;height:35px;border:1px solid #c4c4c4;border-radius:4px;box-sizing:border-box;background:#dcdcdc;"></div>
<div class="t" style="left:302.70000000000005px;top:138.21px;font-family:'Liberation Sans', sans-serif;font-size:16px;color:#2a2a2a;font-weight:400;">2025</div>
<div style="position:absolute;left:554px;top:129px;width:242px;height:35px;border:1px solid #c8c8c8;border-radius:4px;box-sizing:border-box;background:#fff;"></div>
<div style="position:absolute;left:755px;top:130px;width:1px;height:33px;background:#d0d0d0;"></div>
<svg style="position:absolute;left:769px;top:142px" width="12" height="8" viewBox="0 0 12 8"><path d="M0.8 1.2 L6 6.2 L11.2 1.2" fill="none" stroke="#555" stroke-width="1.7"/></svg>
<svg style="position:absolute;left:726px;top:138px" width="17" height="17" viewBox="0 0 17 17"><path d="M8.5 0.5 V16.5 M0.5 8.5 H16.5" stroke="#12a51a" stroke-width="2"/></svg>
<div class="t" style="left:565px;top:138.21px;font-family:'Liberation Sans', sans-serif;font-size:16px;color:#2a2a2a;font-weight:400;">2.340.000</div>
<div style="position:absolute;left:816px;top:136px;width:20px;height:20px;background:#12a51a;border-radius:3px;"></div>
<svg style="position:absolute;left:816px;top:136px" width="20" height="20" viewBox="0 0 20 20"><path d="M5 10.5 L8.5 14 L15 6.5" fill="none" stroke="#fff" stroke-width="2.4" stroke-linecap="round" stroke-linejoin="round"/></svg>
<div class="t" style="left:843.5px;top:138.51px;font-family:'Liberation Sans', sans-serif;font-size:16px;color:#2a2a2a;font-weight:400;">Sử dụng Theo dõi công</div>
<div class="t" style="left:30px;top:187.41px;font-family:'Liberation Sans', sans-serif;font-size:16px;color:#212121;font-weight:400;-webkit-text-stroke:0.35px #212121;letter-spacing:0.2px;">Phạm vi công</div>
<div class="t" style="left:132.70000000000005px;top:185.72px;font-family:'Liberation Sans', sans-serif;font-size:21px;color:#f03c3c;font-weight:400;">*</div>
<div style="position:absolute;left:30px;top:211px;width:1028px;height:35px;border:1px solid #62d48e;border-radius:4px;box-sizing:border-box;background:#fff;"></div>
<div style="position:absolute;left:1017px;top:212px;width:1px;height:33px;background:#d0d0d0;"></div>
<svg style="position:absolute;left:1031px;top:225px" width="12" height="8" viewBox="0 0 12 8"><path d="M0.8 1.2 L6 6.2 L11.2 1.2" fill="none" stroke="#555" stroke-width="1.7"/></svg>
<div class="t" style="left:41px;top:221.41px;font-family:'Liberation Sans', sans-serif;font-size:16px;color:#2a2a2a;font-weight:400;letter-spacing:0.13px;">Quá trình công thuộc tháng 7/2025</div>
<div class="t" style="left:30px;top:267.71px;font-family:'Liberation Sans', sans-serif;font-size:16px;color:#212121;font-weight:400;-webkit-text-stroke:0.35px #212121;letter-spacing:0.12px;">Phạm vi tính</div>
<div class="t" style="left:124.20000000000005px;top:264.82px;font-family:'Liberation Sans', sans-serif;font-size:21px;color:#f03c3c;font-weight:400;">*</div>
<svg style="position:absolute;left:30px;top:296px" width="20" height="20" viewBox="0 0 20 20"><circle cx="10" cy="10" r="9.2" fill="#fff" stroke="#12a51a" stroke-width="1.6"/><circle cx="10" cy="10" r="5" fill="#12a51a"/></svg>
<div class="t" style="left:61px;top:297.91px;font-family:'Liberation Sans', sans-serif;font-size:16px;color:#2a2a2a;font-weight:400;">Tất cả</div>
<svg style="position:absolute;left:125px;top:296px" width="20" height="20" viewBox="0 0 20 20"><circle cx="10" cy="10" r="9.2" fill="#fff" stroke="#666" stroke-width="1.4"/></svg>
<div class="t" style="left:155.5px;top:297.91px;font-family:'Liberation Sans', sans-serif;font-size:16px;color:#2a2a2a;font-weight:400;">Theo Loại cán bộ</div>
<svg style="position:absolute;left:299px;top:296px" width="20" height="20" viewBox="0 0 20 20"><circle cx="10" cy="10" r="9.2" fill="#fff" stroke="#666" stroke-width="1.4"/></svg>
<div class="t" style="left:329.5px;top:297.91px;font-family:'Liberation Sans', sans-serif;font-size:16px;color:#2a2a2a;font-weight:400;">Theo Phòng ban</div>
<svg style="position:absolute;left:467px;top:296px" width="20" height="20" viewBox="0 0 20 20"><circle cx="10" cy="10" r="9.2" fill="#fff" stroke="#666" stroke-width="1.4"/></svg>
<div class="t" style="left:497.4px;top:297.91px;font-family:'Liberation Sans', sans-serif;font-size:16px;color:#2a2a2a;font-weight:400;letter-spacing:-0.15px;">Tùy chọn Cán bộ nhân viên</div>
<div class="t" style="left:30px;top:352.41px;font-family:'Liberation Sans', sans-serif;font-size:16px;color:#212121;font-weight:400;-webkit-text-stroke:0.35px #212121;letter-spacing:0.1px;">Tên bảng lương</div>
<div class="t" style="left:147.20000000000005px;top:347.12px;font-family:'Liberation Sans', sans-serif;font-size:21px;color:#f03c3c;font-weight:400;">*</div>
<div style="position:absolute;left:30px;top:376px;width:1028px;height:35px;border:1px solid #c8c8c8;border-radius:4px;box-sizing:border-box;background:#fff;"></div>
<div class="t" style="left:42px;top:386.01px;font-family:'Liberation Sans', sans-serif;font-size:16px;color:#2a2a2a;font-weight:400;">Bảng lương, phụ cấp cán bộ nhân viên tháng 8 năm 2025</div>
<div style="position:absolute;left:0px;top:441px;width:1088px;height:60px;background:#f4f4f4;"></div>
<div style="position:absolute;left:830px;top:454px;width:99px;height:35px;border:1px solid #d0d0d0;border-radius:4px;box-sizing:border-box;background:#fff;"></div>
<div class="t" style="left:830.0px;width:99px;text-align:center;top:464.71px;font-family:'Liberation Sans', sans-serif;font-size:16px;color:#222;font-weight:400;-webkit-text-stroke:0.35px #222;">Hủy bỏ</div>
<div style="position:absolute;left:940px;top:454px;width:118px;height:35px;background:#11a818;border-radius:5px;"></div>
<div class="t" style="left:940.0px;width:118px;text-align:center;top:464.71px;font-family:'Liberation Sans', sans-serif;font-size:16px;color:#fff;font-weight:400;-webkit-text-stroke:0.35px #fff;">Tính lương</div>
</div>
<div style="position:absolute;left:1342px;top:665px;width:151px;height:66px;border:2px solid #ff3c3c;box-sizing:border-box;"></div>
<div style="position:absolute;left:1900px;top:405px;width:19px;height:40px;background:#12a51a;border-radius:4px 0 0 4px;"></div>
<svg style="position:absolute;left:1906.5px;top:418px" width="10" height="14" viewBox="0 0 10 14"><path d="M7.5 1.5 L2.5 7 L7.5 12.5" fill="none" stroke="#fff" stroke-width="2"/></svg>
</body></html>
